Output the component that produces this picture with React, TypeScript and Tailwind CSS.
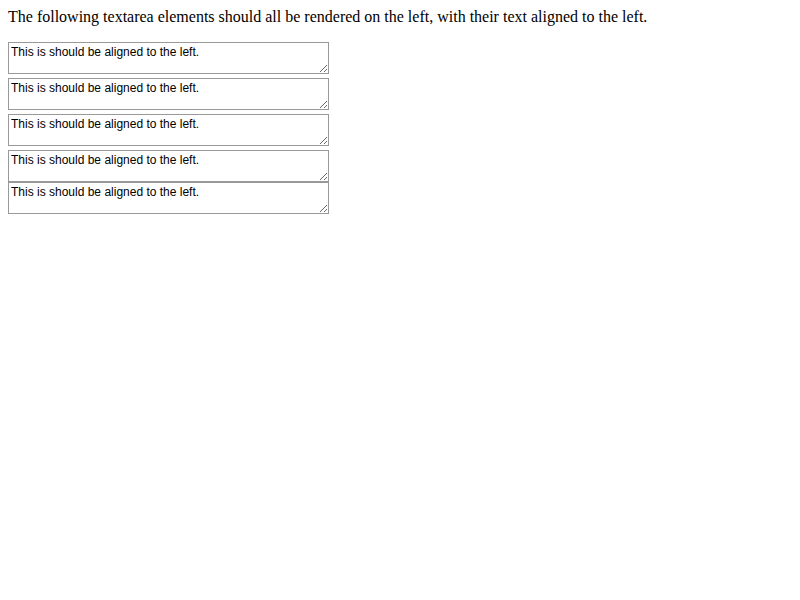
import React from 'react';

const ROWS = [0, 1, 2, 3, 4];

export default function App() {
  return (
    <div className="min-h-screen bg-white p-2 text-black">
      <div className="font-['Liberation_Serif',serif] text-[16px] leading-[18px]">
        The following textarea elements should all be rendered on the left, with their text aligned to the left.
      </div>
      <div className="mt-4 flex flex-col">
        {ROWS.map((i) => (
          <textarea
            key={i}
            readOnly
            defaultValue="This is should be aligned to the left."
            className={`block h-[32px] w-[321px] resize border border-[#999] bg-white px-[2px] pt-[3px] pb-[1px] text-left font-['Liberation_Sans',Arial,sans-serif] text-[12px] leading-[13px] text-black outline-none ${i === 0 ? '' : i === 4 ? 'mt-0' : 'mt-1'}`}
          />
        ))}
      </div>
    </div>
  );
}
